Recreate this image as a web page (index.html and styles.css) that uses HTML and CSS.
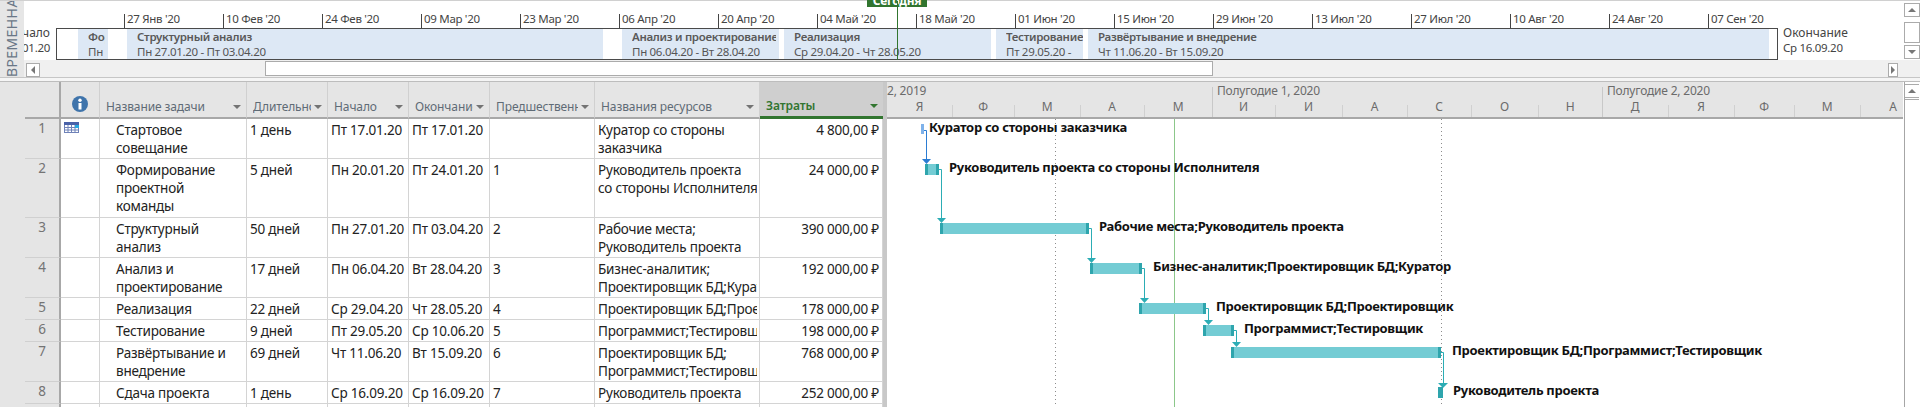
FILE: index.html
```html
<!DOCTYPE html>
<html lang="ru">

<head>
    <meta charset="UTF-8">
    <title>Диаграмма Ганта</title>
    <link rel="stylesheet" href="styles.css">
</head>

<body>
    <!-- временная шкала -->
    <div class="timeline">
        <div class="tl-tab"><span>ВРЕМЕННАЯ ШКАЛА</span></div>
        <div class="tl-main">
            <div class="tl-top">
                <div class="tl-side tl-start">
                    <span>Начало</span>
                    <span>Пт 17.01.20</span>
                </div>
                <div class="tl-center">
                    <div class="tl-scale">
                        <div class="tick">27 Янв '20</div>
                        <div class="tick">10 Фев '20</div>
                        <div class="tick">24 Фев '20</div>
                        <div class="tick">09 Мар '20</div>
                        <div class="tick">23 Мар '20</div>
                        <div class="tick">06 Апр '20</div>
                        <div class="tick">20 Апр '20</div>
                        <div class="tick">04 Май '20</div>
                        <div class="tick">18 Май '20</div>
                        <div class="tick">01 Июн '20</div>
                        <div class="tick">15 Июн '20</div>
                        <div class="tick">29 Июн '20</div>
                        <div class="tick">13 Июл '20</div>
                        <div class="tick">27 Июл '20</div>
                        <div class="tick">10 Авг '20</div>
                        <div class="tick">24 Авг '20</div>
                        <div class="tick">07 Сен '20</div>
                    </div>
                    <div class="tl-box">
                        <div class="tl-bar b1"><b>Формирование</b><span>Пн 20.01.20</span></div>
                        <div class="tl-bar b2"><b>Структурный анализ</b><span>Пн 27.01.20 - Пт 03.04.20</span></div>
                        <div class="tl-bar b3"><b>Анализ и проектирование</b><span>Пн 06.04.20 - Вт 28.04.20</span></div>
                        <div class="tl-bar b4"><b>Реализация</b><span>Ср 29.04.20 - Чт 28.05.20</span></div>
                        <div class="tl-bar b5"><b>Тестирование</b><span>Пт 29.05.20 -</span></div>
                        <div class="tl-bar b6"><b>Развёртывание и внедрение</b><span>Чт 11.06.20 - Вт 15.09.20</span></div>
                    </div>
                </div>
                <div class="tl-side tl-end">
                    <span>Окончание</span>
                    <span>Ср 16.09.20</span>
                </div>
                <div class="tl-vscroll">
                    <div class="sb-btn"><i class="arr up"></i></div>
                    <div class="sb-thumb"></div>
                    <div class="sb-btn"><i class="arr down"></i></div>
                </div>
            </div>
            <div class="tl-hscroll">
                <div class="sb-btn-h left"><i class="arr lf"></i></div>
                <div class="sb-thumb-h"></div>
                <div class="sb-btn-h right"><i class="arr rt"></i></div>
            </div>
        </div>
        <div class="today-flag">Сегодня</div>
        <div class="today-line"></div>
    </div>

    <div class="split"></div>

    <div class="main">
        <!-- таблица задач -->
        <table class="tasks">
            <colgroup>
                <col class="c-gap">
                <col class="c-num">
                <col class="c-ico">
                <col class="c-name">
                <col class="c-date">
                <col class="c-date">
                <col class="c-date">
                <col class="c-pred">
                <col class="c-res">
                <col class="c-cost">
            </colgroup>
            <tr>
                <th class="gap"></th>
                <th class="num"></th>
                <th class="ico-h">
                    <svg width="16" height="16" viewBox="0 0 16 16">
                        <circle cx="8" cy="8" r="8" fill="#3f74ab"/>
                        <rect x="6.500" y="7" width="3" height="6.500" fill="#fff"/>
                        <circle cx="8" cy="4.200" r="1.700" fill="#fff"/>
                    </svg>
                </th>
                <th><div class="hd"><span>Название задачи</span><i class="caret"></i></div></th>
                <th><div class="hd"><span>Длительность</span><i class="caret"></i></div></th>
                <th><div class="hd"><span>Начало</span><i class="caret"></i></div></th>
                <th><div class="hd"><span>Окончание</span><i class="caret"></i></div></th>
                <th><div class="hd"><span>Предшественники</span><i class="caret"></i></div></th>
                <th><div class="hd"><span>Названия ресурсов</span><i class="caret"></i></div></th>
                <th class="sel"><div class="hd"><span>Затраты</span><i class="caret"></i></div></th>
            </tr>
            <tr class="h2">
                <td class="gap"></td>
                <td class="num">1</td>
                <td class="ico">
                    <svg width="15" height="11" viewBox="0 0 15 11">
                        <rect width="15" height="11" fill="#fff"/>
                        <rect width="15" height="3" fill="#4a62a8"/>
                        <path d="M.5 3v8M4 3v8M7.500 3v8M11 3v8M14.500 3v8M0 5.500h15M0 8h15M0 10.500h15" stroke="#6f82b8" fill="none"/>
                        <rect x="11" y="3" width="4" height="3" fill="#27a9e0"/>
                    </svg>
                </td>
                <td class="name">Стартовое<br>совещание</td>
                <td>1 день</td>
                <td>Пт 17.01.20</td>
                <td>Пт 17.01.20</td>
                <td></td>
                <td><div class="res">Куратор со стороны<br>заказчика</div></td>
                <td class="cost">4 800,00 ₽</td>
            </tr>
            <tr class="h3">
                <td class="gap"></td>
                <td class="num">2</td>
                <td></td>
                <td class="name">Формирование<br>проектной<br>команды</td>
                <td>5 дней</td>
                <td>Пн 20.01.20</td>
                <td>Пт 24.01.20</td>
                <td>1</td>
                <td><div class="res">Руководитель проекта<br>со стороны Исполнителя</div></td>
                <td class="cost">24 000,00 ₽</td>
            </tr>
            <tr class="h2">
                <td class="gap"></td>
                <td class="num">3</td>
                <td></td>
                <td class="name">Структурный<br>анализ</td>
                <td>50 дней</td>
                <td>Пн 27.01.20</td>
                <td>Пт 03.04.20</td>
                <td>2</td>
                <td><div class="res">Рабочие места;<br>Руководитель проекта</div></td>
                <td class="cost">390 000,00 ₽</td>
            </tr>
            <tr class="h2">
                <td class="gap"></td>
                <td class="num">4</td>
                <td></td>
                <td class="name">Анализ и<br>проектирование</td>
                <td>17 дней</td>
                <td>Пн 06.04.20</td>
                <td>Вт 28.04.20</td>
                <td>3</td>
                <td><div class="res">Бизнес-аналитик;<br>Проектировщик БД;Куратор</div></td>
                <td class="cost">192 000,00 ₽</td>
            </tr>
            <tr class="h1">
                <td class="gap"></td>
                <td class="num">5</td>
                <td></td>
                <td class="name">Реализация</td>
                <td>22 дней</td>
                <td>Ср 29.04.20</td>
                <td>Чт 28.05.20</td>
                <td>4</td>
                <td><div class="res">Проектировщик БД;Проектировщик</div></td>
                <td class="cost">178 000,00 ₽</td>
            </tr>
            <tr class="h1">
                <td class="gap"></td>
                <td class="num">6</td>
                <td></td>
                <td class="name">Тестирование</td>
                <td>9 дней</td>
                <td>Пт 29.05.20</td>
                <td>Ср 10.06.20</td>
                <td>5</td>
                <td><div class="res">Программист;Тестировщик</div></td>
                <td class="cost">198 000,00 ₽</td>
            </tr>
            <tr class="h2">
                <td class="gap"></td>
                <td class="num">7</td>
                <td></td>
                <td class="name">Развёртывание и<br>внедрение</td>
                <td>69 дней</td>
                <td>Чт 11.06.20</td>
                <td>Вт 15.09.20</td>
                <td>6</td>
                <td><div class="res">Проектировщик БД;<br>Программист;Тестировщик</div></td>
                <td class="cost">768 000,00 ₽</td>
            </tr>
            <tr class="h1">
                <td class="gap"></td>
                <td class="num">8</td>
                <td></td>
                <td class="name">Сдача проекта</td>
                <td>1 день</td>
                <td>Ср 16.09.20</td>
                <td>Ср 16.09.20</td>
                <td>7</td>
                <td><div class="res">Руководитель проекта</div></td>
                <td class="cost">252 000,00 ₽</td>
            </tr>
            <tr class="h1">
                <td class="gap"></td>
                <td class="num"></td>
                <td></td><td></td><td></td><td></td><td></td><td></td><td></td><td></td>
            </tr>
        </table>

        <div class="divider"></div>

        <!-- диаграмма -->
        <div class="gantt">
            <div class="g-head">
                <div class="halves">
                    <div class="halve h-a">2, 2019</div>
                    <div class="halve h-b">Полугодие 1, 2020</div>
                    <div class="halve h-c">Полугодие 2, 2020</div>
                </div>
                <div class="months">
                    <div class="month first">Я</div>
                    <div class="month">Ф</div>
                    <div class="month">М</div>
                    <div class="month">А</div>
                    <div class="month">М</div>
                    <div class="month big">И</div>
                    <div class="month">И</div>
                    <div class="month">А</div>
                    <div class="month">С</div>
                    <div class="month">О</div>
                    <div class="month">Н</div>
                    <div class="month big">Д</div>
                    <div class="month">Я</div>
                    <div class="month">Ф</div>
                    <div class="month">М</div>
                    <div class="month">А</div>
                </div>
            </div>
            <!-- координаты viewBox совпадают с координатами страницы -->
            <svg class="g-chart" viewBox="887 119 1016 288" width="1016" height="288">
                <line class="dots" x1="1055.500" y1="119" x2="1055.500" y2="407"/>
                <line class="dots" x1="1441.500" y1="119" x2="1441.500" y2="407"/>
                <line class="now" x1="1174.500" y1="119" x2="1174.500" y2="407"/>

                <rect class="ms" x="921" y="124" width="3" height="10"/>
                <path class="link blue" d="M924 130.500h2.500V159"/>
                <path class="head-blue" d="M922 159h9l-4.500 5z"/>

                <rect class="mid" x="925" y="164" width="14" height="11"/>
                <rect class="end" x="925" y="164" width="3" height="11"/>
                <rect class="end" x="936" y="164" width="3" height="11"/>
                <path class="link" d="M939 169.500h2.500V218"/>
                <path class="head" d="M937 218h9l-4.500 5z"/>

                <rect class="mid" x="940" y="223" width="149" height="11"/>
                <rect class="end" x="940" y="223" width="3" height="11"/>
                <rect class="end" x="1086" y="223" width="3" height="11"/>
                <path class="link" d="M1089 228.500h2.500V258"/>
                <path class="head" d="M1087 258h9l-4.500 5z"/>

                <rect class="mid" x="1090" y="263" width="52" height="11"/>
                <rect class="end" x="1090" y="263" width="3" height="11"/>
                <rect class="end" x="1139" y="263" width="3" height="11"/>
                <path class="link" d="M1142 268.500h2.500V298"/>
                <path class="head" d="M1140 298h9l-4.500 5z"/>

                <rect class="mid" x="1139" y="303" width="67" height="11"/>
                <rect class="end" x="1139" y="303" width="3" height="11"/>
                <rect class="end" x="1203" y="303" width="3" height="11"/>
                <path class="link" d="M1206 308.500h2.500V320"/>
                <path class="head" d="M1204 320h9l-4.500 5z"/>

                <rect class="mid" x="1203" y="325" width="31" height="11"/>
                <rect class="end" x="1203" y="325" width="3" height="11"/>
                <rect class="end" x="1231" y="325" width="3" height="11"/>
                <path class="link" d="M1234 330.500h2.500V342"/>
                <path class="head" d="M1232 342h9l-4.500 5z"/>

                <rect class="mid" x="1231" y="347" width="210" height="11"/>
                <rect class="end" x="1231" y="347" width="3" height="11"/>
                <rect class="end" x="1438" y="347" width="3" height="11"/>
                <path class="link" d="M1441 352.500h2.500V383"/>
                <path class="head" d="M1438 383h10l-5 5z"/>

                <rect class="end" x="1438" y="387" width="5" height="11"/>

                <text class="lbl" x="929" y="132">Куратор со стороны заказчика</text>
                <text class="lbl" x="949" y="172">Руководитель проекта со стороны Исполнителя</text>
                <text class="lbl" x="1099" y="231">Рабочие места;Руководитель проекта</text>
                <text class="lbl" x="1153" y="271">Бизнес-аналитик;Проектировщик БД;Куратор</text>
                <text class="lbl" x="1216" y="311">Проектировщик БД;Проектировщик</text>
                <text class="lbl" x="1244" y="333">Программист;Тестировщик</text>
                <text class="lbl" x="1452" y="355">Проектировщик БД;Программист;Тестировщик</text>
                <text class="lbl" x="1453" y="395">Руководитель проекта</text>
            </svg>
        </div>

        <div class="vscroll">
            <div class="sb-btn"><i class="arr up"></i></div>
            <div class="sb-thumb"></div>
        </div>
    </div>
</body>

</html>
```

FILE: styles.css
```css
* {
    box-sizing: border-box;
}

body {
    margin: 0;
    width: 1920px;
    height: 407px;
    overflow: hidden;
    background: #fff;
    font-family: "Noto Sans", "Open Sans", sans-serif;
    font-size: 11.500px;
    letter-spacing: -.3px;
    color: #222;
}

/* timeline */
.timeline {
    position: relative;
    display: flex;
    height: 77px;
    border-top: 1px solid #d0d0d0;
}

.tl-tab {
    width: 24px;
    height: 76px;
    background: #e6e6e6;
    overflow: hidden;
    display: flex;
    justify-content: center;
    align-items: flex-start;
}

.tl-tab span {
    writing-mode: vertical-rl;
    transform: rotate(180deg);
    white-space: nowrap;
    font-size: 14px;
    line-height: 16px;
    letter-spacing: .4px;
    color: #6a7786;
    flex: none;
    align-self: flex-end;
}

.tl-main {
    flex: 1;
    min-width: 0;
}

.tl-top {
    display: flex;
    height: 59px;
}

.tl-side {
    display: flex;
    flex-direction: column;
    overflow: hidden;
    padding-top: 24px;
    line-height: 15px;
    white-space: nowrap;
    color: #444;
}

.tl-side span:first-child {
    font-size: 12px;
    letter-spacing: 0;
}

.tl-start {
    width: 32px;
    align-items: flex-end;
    padding-right: 6px;
}

.tl-start span, .tl-end span {
    flex: none;
}

.tl-end {
    width: 126px;
    padding-left: 5px;
}

.tl-center {
    width: 1722px;
}

.tl-scale {
    display: flex;
    height: 27px;
    padding-left: 68px;
    padding-top: 13px;
}

.tick {
    width: 99px;
    flex: none;
    border-left: 1px solid #444;
    padding-left: 2px;
    line-height: 9px;
    white-space: nowrap;
    color: #444;
}

.tl-box {
    display: flex;
    height: 32px;
    border: 1px solid #4a4a4a;
}

.tl-bar {
    display: flex;
    flex-direction: column;
    flex: none;
    background: #dde8f5;
    padding: 0 3px 0 10px;
    line-height: 15px;
    white-space: nowrap;
    color: #555;
}

.tl-bar b, .tl-bar span {
    overflow: hidden;
}

.tl-bar b {
    font-weight: 600;
    color: #595959;
}

.b1 { width: 30px; margin-left: 21px; }
.b2 { width: 476px; margin-left: 19px; }
.b3 { width: 157px; margin-left: 19px; }
.b4 { width: 207px; margin-left: 5px; }
.b5 { width: 87px; margin-left: 5px; padding-right: 0; }
.b6 { width: 681px; margin-left: 5px; }

.tl-vscroll {
    width: 16px;
    margin-left: 0;
    padding-top: 2px;
}

.vscroll {
    width: 15px;
    margin-left: 1px;
    padding-top: 2px;
    border-left: 1px solid #a6a6a6;
}

.sb-btn {
    height: 14px;
    border: 1px solid #ababab;
    background: #fff;
    display: flex;
    align-items: center;
    justify-content: center;
}

.sb-thumb {
    height: 21px;
    margin: 5px 0 2px;
    border: 1px solid #ababab;
    background: #fff;
}

.vscroll .sb-btn {
    border-left: 0;
    border-right: 0;
}

.vscroll .sb-thumb {
    height: 320px;
    margin: 1px 0 0;
    border-left: 0;
    border-right: 0;
}

.arr {
    display: block;
    width: 0;
    height: 0;
    border: 4px solid transparent;
}

.arr.up { border-bottom-color: #777; border-top-width: 0; }
.arr.down { border-top-color: #777; border-bottom-width: 0; }
.arr.lf { border-right-color: #777; border-left-width: 0; }
.arr.rt { border-left-color: #777; border-right-width: 0; }

.tl-hscroll {
    display: flex;
    height: 17px;
    background: #f0f0f0;
    padding-top: 1px;
}

.sb-btn-h {
    width: 14px;
    height: 14px;
    margin-top: 2px;
    border: 1px solid #ababab;
    background: #fff;
    display: flex;
    align-items: center;
    justify-content: center;
}

.sb-btn-h.left {
    margin-left: 2px;
}

.sb-btn-h.right {
    width: 10px;
    margin-left: 675px;
}

.sb-thumb-h {
    width: 948px;
    height: 15px;
    margin-left: 225px;
    border: 1px solid #ababab;
    background: #fff;
}

.today-flag {
    position: absolute;
    left: 867px;
    top: -1px;
    width: 60px;
    height: 7px;
    overflow: hidden;
    background: #31752f;
    color: #fff;
    font-size: 12px;
    font-weight: 700;
    line-height: 1px;
    text-align: center;
}

.today-line {
    position: absolute;
    left: 897px;
    top: 0;
    width: 1px;
    height: 59px;
    background: #31752f;
}

.split {
    height: 4px;
    border-top: 1px solid #c6c6c6;
    background: #f5f5f5;
}

/* task table */
.main {
    display: flex;
    height: 326px;
    overflow: hidden;
    border-top: 1px solid #bdbdbd;
}

.tasks {
    width: 883px;
    flex: none;
    align-self: flex-start;
    table-layout: fixed;
    border-collapse: separate;
    border-spacing: 0;
    font-size: 13.500px;
    letter-spacing: -.2px;
    line-height: 18px;
}

.c-gap { width: 25px; }
.c-num { width: 36px; }
.c-ico { width: 39px; }
.c-name { width: 147px; }
.c-date { width: 81px; }
.c-pred { width: 105px; }
.c-res { width: 165px; }
.c-cost { width: 123px; }

.tasks th {
    height: 37px;
    padding: 0 0 1px;
    background: #e5e5e5;
    border-right: 1px solid #d0d0d0;
    border-bottom: 2px solid #a8a8a8;
    vertical-align: bottom;
    font-size: 12px;
    letter-spacing: -.1px;
    font-weight: 400;
    text-align: left;
    color: #5f6b76;
}

.hd {
    display: flex;
    align-items: center;
    padding-left: 6px;
    padding-right: 5px;
}

.hd span {
    flex: 1;
    min-width: 0;
    overflow: hidden;
    white-space: nowrap;
}

.caret {
    flex: none;
    margin-left: 3px;
    width: 0;
    height: 0;
    border-left: 4px solid transparent;
    border-right: 4px solid transparent;
    border-top: 4px solid #737373;
}

.tasks th.sel {
    background: #cfcfcf;
    border-bottom: 3px solid #31752f;
    font-weight: 600;
    color: #31752f;
    border-right: 0;
}

.sel .caret {
    border-top-color: #31752f;
}

.tasks th.ico-h {
    vertical-align: top;
    padding: 14px 0 0 11px;
}

.ico-h svg, .ico svg {
    display: block;
}

.tasks td {
    padding: 2px 2px 0 3px;
    vertical-align: top;
    white-space: nowrap;
    overflow: hidden;
    border-right: 1px solid #d4d4d4;
    border-bottom: 1px solid #d4d4d4;
    color: #222;
}

.tasks th.gap, .tasks td.gap {
    background: #e5e5e5;
    border-right: 0;
    border-bottom: 0;
}

.tasks th.num {
    border-right: 2px solid #a8a8a8;
}

.tasks td.num {
    background: #e5e5e5;
    border-right: 2px solid #a8a8a8;
    border-bottom-color: #d0d0d0;
    padding: 0;
    text-align: center;
    color: #747474;
}

.tasks td.ico {
    padding: 3px 0 0 3px;
}

.tasks td.name {
    padding-left: 16px;
}

.tasks td.cost {
    text-align: right;
    padding-right: 3px;
}

.res {
    overflow: hidden;
}

.h1 td { height: 22px; }
.h2 td { height: 40px; }
.h3 td { height: 59px; }

.divider {
    width: 4px;
    flex: none;
    background: #c8c8c8;
}

/* gantt */
.gantt {
    width: 1016px;
    flex: none;
}

.g-head {
    height: 37px;
    overflow: hidden;
    background: #e5e5e5;
    border-bottom: 2px solid #a8a8a8;
    color: #6b6b6b;
    font-size: 12px;
    letter-spacing: -.2px;
    line-height: 18px;
}

.halves {
    display: flex;
    height: 18px;
}

.halve {
    flex: none;
    white-space: nowrap;
    background: linear-gradient(#c8c8c8, #c8c8c8) left bottom / 1px 13px no-repeat;
}

.h-a { width: 325px; background: none; }
.h-b { width: 390px; padding-left: 5px; }
.h-c { width: 301px; padding-left: 5px; }

.months {
    display: grid;
    grid-template-columns: 65px 62px 66px 64px 68px 63px 67px 65px 64px 67px 64px 66px 66px 60px 66px 66px;
    height: 18px;
    line-height: 14px;
    width: 1039px;
}

.month {
    text-align: center;
    background: linear-gradient(#d0d0d0, #d0d0d0) left bottom / 1px 13px no-repeat;
}

.month.first {
    background: none;
}

.month.big {
    background-size: 1px 100%;
    background-image: linear-gradient(#c8c8c8, #c8c8c8);
}

.g-chart {
    display: block;
}

.dots {
    stroke: #8c8c8c;
    stroke-width: 1;
    stroke-dasharray: 1 3;
}

.now {
    stroke: #8cc78a;
    stroke-width: 1;
}

.ms { fill: #7fb2ea; }
.mid { fill: #74ccd4; }
.end { fill: #2ea5ad; }

.link {
    fill: none;
    stroke: #2cadb5;
    stroke-width: 1;
}

.link.blue {
    stroke: #2b7cd3;
}

.head { fill: #2cadb5; }
.head-blue { fill: #2b7cd3; }

.lbl {
    font-size: 13px;
    font-weight: 700;
    letter-spacing: -.3px;
    fill: #111;
}
```
